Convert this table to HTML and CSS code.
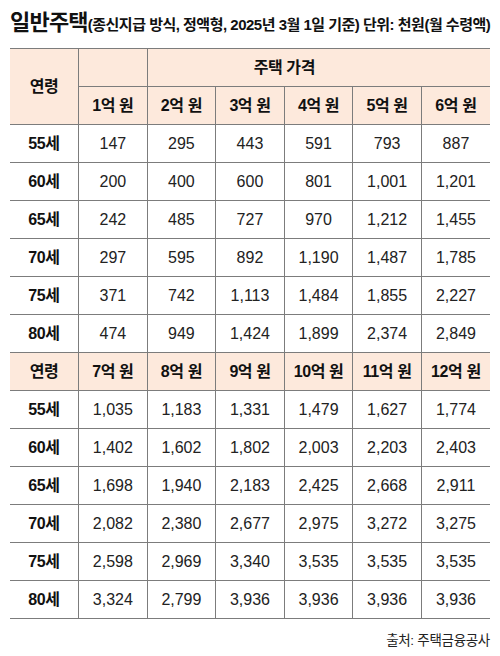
FILE: index.html
```html
<!DOCTYPE html>
<html lang="ko">
<head>
<meta charset="utf-8">
<link rel="stylesheet" href="styles.css">
</head>
<body>
<div class="page">
  <h1 class="title"><span class="main">일반주택</span><span class="sub">(종신지급 방식, 정액형, 2025년 3월 1일 기준) 단위: 천원(월 수령액)</span></h1>
  <table class="tbl">
    <colgroup><col><col><col><col><col><col><col></colgroup>
    <tr class="head">
      <th rowspan="2">연령</th>
      <th class="blank"></th>
      <th colspan="5" class="span">주택 가격</th>
    </tr>
    <tr class="head head2">
      <th>1억 원</th><th>2억 원</th><th>3억 원</th><th>4억 원</th><th>5억 원</th><th>6억 원</th>
    </tr>
    <tr><th>55세</th><td>147</td><td>295</td><td>443</td><td>591</td><td>793</td><td>887</td></tr>
    <tr><th>60세</th><td>200</td><td>400</td><td>600</td><td>801</td><td>1,001</td><td>1,201</td></tr>
    <tr><th>65세</th><td>242</td><td>485</td><td>727</td><td>970</td><td>1,212</td><td>1,455</td></tr>
    <tr><th>70세</th><td>297</td><td>595</td><td>892</td><td>1,190</td><td>1,487</td><td>1,785</td></tr>
    <tr><th>75세</th><td>371</td><td>742</td><td>1,113</td><td>1,484</td><td>1,855</td><td>2,227</td></tr>
    <tr><th>80세</th><td>474</td><td>949</td><td>1,424</td><td>1,899</td><td>2,374</td><td>2,849</td></tr>
    <tr class="head">
      <th>연령</th><th>7억 원</th><th>8억 원</th><th>9억 원</th><th>10억 원</th><th>11억 원</th><th>12억 원</th>
    </tr>
    <tr><th>55세</th><td>1,035</td><td>1,183</td><td>1,331</td><td>1,479</td><td>1,627</td><td>1,774</td></tr>
    <tr><th>60세</th><td>1,402</td><td>1,602</td><td>1,802</td><td>2,003</td><td>2,203</td><td>2,403</td></tr>
    <tr><th>65세</th><td>1,698</td><td>1,940</td><td>2,183</td><td>2,425</td><td>2,668</td><td>2,911</td></tr>
    <tr><th>70세</th><td>2,082</td><td>2,380</td><td>2,677</td><td>2,975</td><td>3,272</td><td>3,275</td></tr>
    <tr><th>75세</th><td>2,598</td><td>2,969</td><td>3,340</td><td>3,535</td><td>3,535</td><td>3,535</td></tr>
    <tr class="last"><th>80세</th><td>3,324</td><td>2,799</td><td>3,936</td><td>3,936</td><td>3,936</td><td>3,936</td></tr>
  </table>
  <p class="source">출처: 주택금융공사</p>
</div>
</body>
</html>
```
FILE: styles.css
```css
html, body {
  margin: 0;
  padding: 0;
  background: #ffffff;
}
body {
  font-family: "Liberation Sans", "Noto Sans CJK KR", sans-serif;
  color: #111111;
}
.page {
  padding: 4px 10px 0 10px;
}
.title {
  margin: 0;
  height: 44px;
  display: flex;
  align-items: baseline;
  white-space: nowrap;
}
.title .main {
  font-size: 22px;
  font-weight: 700;
  letter-spacing: -0.8px;
}
.title .sub {
  font-size: 15px;
  font-weight: 700;
  letter-spacing: -0.5px;
}
.tbl {
  width: 480px;
  border-collapse: collapse;
  table-layout: fixed;
  font-size: 16px;
  border-top: 1.5px solid #333333;
  border-bottom: 1.5px solid #333333;
}
.tbl tr {
  height: 38px;
}
.tbl th, .tbl td {
  padding: 0;
  text-align: center;
  vertical-align: middle;
  border: 1px solid #7c7c7c;
  line-height: 20px;
}
.tbl th:first-child {
  border-left: none;
}
.tbl th:last-child, .tbl td:last-child {
  border-right: none;
}
.tbl th {
  font-weight: 700;
  color: #111111;
  letter-spacing: -0.4px;
}
.tbl td {
  font-weight: 400;
  color: #222222;
}
.tbl .head th {
  background: #fde9dc;
}
.tbl .head .span {
  text-align: center;
  padding-right: 69px;
  border-right: none;
}
.source {
  margin: 10px 0 0 0;
  text-align: right;
  font-size: 13.5px;
  font-weight: 400;
  color: #222222;
  letter-spacing: -0.3px;
}
```
